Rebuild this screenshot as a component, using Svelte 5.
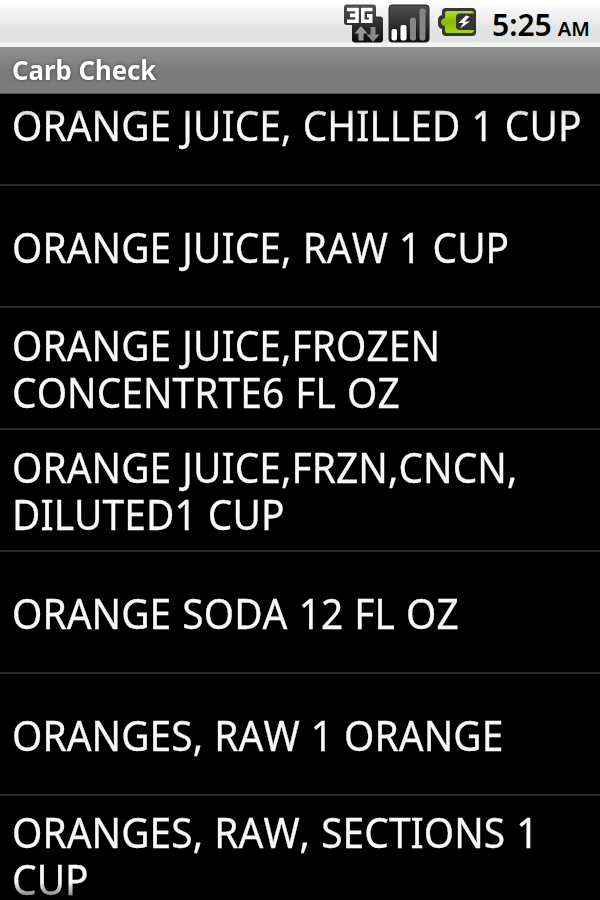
<script lang="ts">
  interface Food {
    id: number;
    lines: string[];
  }

  let foods = $state<Food[]>([
    { id: 1, lines: ["ORANGE JUICE, CHILLED 1 CUP"] },
    { id: 2, lines: ["ORANGE JUICE, RAW 1 CUP"] },
    { id: 3, lines: ["ORANGE JUICE,FROZEN", "CONCENTRTE6 FL OZ"] },
    { id: 4, lines: ["ORANGE JUICE,FRZN,CNCN,", "DILUTED1 CUP"] },
    { id: 5, lines: ["ORANGE SODA 12 FL OZ"] },
    { id: 6, lines: ["ORANGES, RAW 1 ORANGE"] },
    { id: 7, lines: ["ORANGES, RAW, SECTIONS 1", "CUP"] },
  ]);
</script>

<div class="screen">
  <header class="status-bar">
    <svg class="network" width="40" height="40" viewBox="0 0 40 40">
      <defs>
        <linearGradient id="dark" x1="0" y1="0" x2="0" y2="1">
          <stop offset="0" stop-color="#505050" />
          <stop offset="0.5" stop-color="#303030" />
          <stop offset="1" stop-color="#0c0c0c" />
        </linearGradient>
      </defs>
      <path d="M3 0.500h26q3 0 3 3v9h4q3 0 3 3v20q0 3-3 3H11q-3 0-3-3V21H3q-3 0-3-3V3.500q0-3 3-3z" fill="url(#dark)" />
      <path d="M3 5.500H13V17.300H3M6 11.400H13M28.500 5.500H18.800V17.300H26.700V11.800H23" fill="none" stroke="#fff" stroke-width="3.600" />
      <path d="M17 22l6.500 7.500h-4v7h-5v-7h-4z" fill="#999" />
      <path d="M26.500 23h5v7.500h4L29 38l-6.500-7.500h4z" fill="#888" />
    </svg>
    <svg class="signal" width="42" height="40" viewBox="0 0 42 40">
      <rect x="1" y="1" width="40" height="37" rx="3" fill="url(#dark)" stroke="#222" />
      <rect x="3.500" y="25" width="5.500" height="11.500" rx="2" fill="#fff" />
      <rect x="12.500" y="21" width="6" height="15.500" rx="2" fill="#fff" />
      <rect x="22" y="13.500" width="6" height="23" rx="2.500" fill="#858585" />
      <rect x="31.500" y="4.500" width="6" height="32" rx="2.500" fill="#858585" />
    </svg>
    <svg class="battery" width="42" height="36" viewBox="0 0 42 36">
      <defs>
        <linearGradient id="charge" x1="0" y1="0" x2="0" y2="1">
          <stop offset="0" stop-color="#b0dc28" />
          <stop offset="0.5" stop-color="#85bd00" />
          <stop offset="1" stop-color="#a5d818" />
        </linearGradient>
      </defs>
      <path d="M9 3h26q4 0 4 4v20q0 4-4 4H9q-4 0-4-4v-3q-4-1-4-5v-4q0-4 4-5V7q0-4 4-4z" fill="#353535" />
      <path d="M10 6h24q3 0 3 2.500H23q-4 0-4 4v9q0 3.500 4 3.500h14q0 3-3 3H10q-2 0-2-3v-4q-4-1-4-4t4-4V9q0-3 2-3z" fill="url(#charge)" />
      <path d="M29 10.500L21.500 18h5L23 23.500 33 16.500h-5.500L32.500 11.500z" fill="#fff" />
    </svg>
    <span class="clock">5:25<span class="meridiem">AM</span></span>
  </header>

  <h1 class="title-bar"><span>Carb Check</span></h1>

  <ul class="food-list">
    {#each foods as food (food.id)}
      <li class="food">
        {#each food.lines as line}
          <span class="line">{line}</span>
        {/each}
      </li>
    {/each}
  </ul>
</div>

<style>
  :global(body) { background: #000; }

  .screen {
    display: flex;
    flex-direction: column;
    width: 600px;
    height: 900px;
    overflow: hidden;
    background: #000;
    font-family: "Noto Sans", "Open Sans", sans-serif;
  }

  .status-bar {
    display: flex;
    flex: none;
    justify-content: flex-end;
    height: 47px;
    box-sizing: border-box;
    padding: 4px 10px 0 0;
    background: linear-gradient(#fff, #f4f5f4 25%, #e2e3e2 60%, #e0e1e0 86%, #f2f5f2 94%, #f2f5f2);
  }

  .network { margin-right: 4px; }
  .signal { margin-right: 7px; }
  .battery { margin: 1px 13px 0 0; }

  .clock {
    width: 98px;
    font-size: 30px;
    font-weight: 600;
    line-height: 42px;
    color: #000;
    white-space: nowrap;
  }

  .meridiem {
    margin-left: 6px;
    font-size: 20px;
  }

  .title-bar {
    flex: none;
    height: 47px;
    box-sizing: border-box;
    margin: 0;
    padding-left: 12px;
    background: linear-gradient(#8f8f8f, #7a7a7a 60%, #7e7e7e);
    border-bottom: 1px solid #505050;
    font-size: 26px;
    font-weight: 700;
    line-height: 46px;
    color: #fff;
    text-shadow: 0 0 4px #444;
  }

  .title-bar span {
    display: inline-block;
    transform: scaleX(0.99);
    transform-origin: left;
  }

  /* scrolled a little, so rows fade out at both ends */
  .food-list {
    flex: 1;
    min-height: 0;
    margin: 0;
    padding: 0;
    overflow: hidden;
    list-style: none;
    mask-image: linear-gradient(#0008, #000 24px, #000 calc(100% - 18px), #0006);
  }

  .food {
    display: flex;
    flex-direction: column;
    justify-content: center;
    align-items: flex-start;
    height: 120px;
    padding: 0 12px;
    border-bottom: 2px solid #2b2b2b;
  }

  .food:first-child { margin-top: -30px; }
  .food:last-child { margin-top: -1px; }

  .line {
    font-size: 42px;
    line-height: 47px;
    font-kerning: none;
    letter-spacing: 0.06px;
    word-spacing: 1px;
    color: #f8f8f8;
    -webkit-text-stroke: 0.3px #f8f8f8;
    white-space: nowrap;
    transform: scaleX(0.926);
    transform-origin: left;
  }
</style>
